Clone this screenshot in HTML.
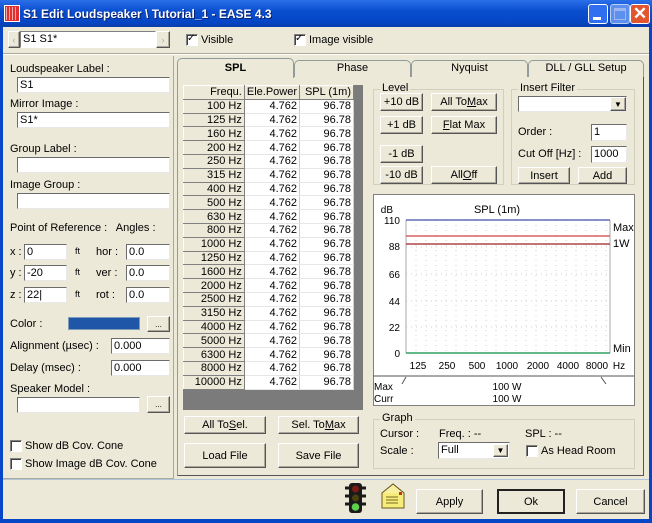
<!DOCTYPE html>
<html><head><meta charset="utf-8">
<style>
*{box-sizing:border-box}
body{margin:0;width:652px;height:523px;overflow:hidden;font-family:"Liberation Sans",Arial,sans-serif;font-size:11px;color:#000;background:#ece9d8;position:relative}
.a{position:absolute}
.in{position:absolute;background:#fff;border:1px solid #7f9db9;border-top-color:#6c6c6c;border-left-color:#6c6c6c;border-right-color:#e8e8e8;border-bottom-color:#e8e8e8;padding:1px 2px;font-size:11px;line-height:13px;white-space:nowrap}
.btn{position:absolute;background:#ece9d8;border:1px solid;border-color:#fff #555 #555 #fff;box-shadow:inset -1px -1px 0 #aca899;text-align:center;font-size:11px;display:flex;align-items:center;justify-content:center}
.cb{position:absolute;width:12px;height:12px;background:#fff;border:1px solid;border-color:#808080 #fff #fff #808080;box-shadow:inset 1px 1px 0 #404040}
.grp{position:absolute;border:1px solid #d0d0bf}
.grp span{position:absolute;top:-8px;left:6px;background:#ece9d8;padding:0 2px}
.tab{position:absolute;top:60px;height:17px;border:1px solid #919b9c;border-bottom:none;border-radius:5px 5px 0 0;background:#ece9d8;text-align:center;line-height:15px;font-size:11px}
table{border-collapse:collapse}
td{height:13.8px;padding:0 2px;text-align:right;font-size:11px;line-height:12px;border-right:1px solid #ccc;border-bottom:1px solid #e6e6e6}
td.h{background:#ece9d8;border:1px solid;border-color:#fff #808080 #808080 #fff}
</style></head><body>
<div class="a" style="left:0;top:0;width:652px;height:27px;background:linear-gradient(#2a6ee8,#0a4fd0 40%,#0545c4 85%,#0a3ea8);"></div>
<div class="a" style="left:4px;top:5px;width:16px;height:17px;background:#e03030;border:1px solid #fff;"></div>
<div class="a" style="left:6px;top:7px;width:12px;height:13px;background:repeating-linear-gradient(90deg,#fff 0 1px,transparent 1px 3px);opacity:.6"></div>
<div class="a" style="left:23px;top:7px;color:#fff;font-weight:bold;font-size:12px;text-shadow:1px 1px #0a1f6e">S1 Edit Loudspeaker \ Tutorial_1 - EASE 4.3</div>
<div class="a" style="left:588px;top:4px;width:20px;height:20px;background:#2f6ff0;border:1px solid #fff;border-radius:3px"><div class="a" style="left:4px;top:12px;width:8px;height:3px;background:#fff"></div></div>
<div class="a" style="left:610px;top:4px;width:20px;height:20px;background:#5d8fee;border:1px solid #b9cdf5;border-radius:3px"><div class="a" style="left:3px;top:3px;width:12px;height:12px;border:1px solid #9db6ee;border-top-width:3px"></div></div>
<div class="a" style="left:630px;top:4px;width:20px;height:20px;background:#e2562f;border:1px solid #fff;border-radius:3px;color:#fff;font-weight:bold;font-size:17px;line-height:18px;text-align:center">✕</div>
<div class="a" style="left:0;top:27px;width:3px;height:496px;background:#0846c8"></div>
<div class="a" style="left:649px;top:27px;width:3px;height:496px;background:#0846c8"></div>
<div class="a" style="left:0;top:519px;width:652px;height:4px;background:#0846c8"></div>

<div class="btn" style="left:8px;top:31px;width:12px;height:17px;color:#aaa;font-size:9px">‹</div>
<div class="in" style="left:20px;top:31px;width:136px;height:17px;border-color:#808080 #fff #fff #808080">S1 S1*</div>
<div class="btn" style="left:156px;top:31px;width:14px;height:17px;color:#aaa;font-size:9px">›</div>
<div class="cb" style="left:186px;top:34px"></div><div class="a" style="left:187px;top:33px;font-size:10px;line-height:12px">✓</div>
<div class="a" style="left:201px;top:34px">Visible</div>
<div class="cb" style="left:294px;top:34px"></div><div class="a" style="left:295px;top:33px;font-size:10px;line-height:12px">✓</div>
<div class="a" style="left:309px;top:34px">Image visible</div>
<div class="a" style="left:3px;top:53px;width:646px;height:1px;background:#aca899"></div>
<div class="a" style="left:3px;top:54px;width:646px;height:1px;background:#fff"></div>

<div class="a" style="left:3px;top:56px;width:171px;height:423px;border-right:1px solid #aca899;border-bottom:1px solid #aca899"></div>
<div class="a" style="left:10px;top:63px">Loudspeaker Label :</div>
<div class="in" style="left:17px;top:77px;width:153px;height:16px">S1</div>
<div class="a" style="left:10px;top:98px">Mirror Image :</div>
<div class="in" style="left:17px;top:112px;width:153px;height:16px">S1*</div>
<div class="a" style="left:10px;top:143px">Group Label :</div>
<div class="in" style="left:17px;top:157px;width:153px;height:16px"></div>
<div class="a" style="left:10px;top:179px">Image Group :</div>
<div class="in" style="left:17px;top:193px;width:153px;height:16px"></div>
<div class="a" style="left:10px;top:222px">Point of Reference :&nbsp;&nbsp; Angles :</div>
<div class="a" style="left:10px;top:246px">x :</div><div class="in" style="left:24px;top:244px;width:43px;height:16px">0</div><div class="a" style="left:75px;top:246px;font-size:9px">ft</div><div class="a" style="left:96px;top:246px">hor :</div><div class="in" style="left:126px;top:244px;width:44px;height:16px">0.0</div>
<div class="a" style="left:10px;top:267px">y :</div><div class="in" style="left:24px;top:265px;width:43px;height:16px">-20</div><div class="a" style="left:75px;top:267px;font-size:9px">ft</div><div class="a" style="left:96px;top:267px">ver :</div><div class="in" style="left:126px;top:265px;width:44px;height:16px">0.0</div>
<div class="a" style="left:10px;top:289px">z :</div><div class="in" style="left:24px;top:287px;width:43px;height:16px">22|</div><div class="a" style="left:75px;top:289px;font-size:9px">ft</div><div class="a" style="left:96px;top:289px">rot :</div><div class="in" style="left:126px;top:287px;width:44px;height:16px">0.0</div>
<div class="a" style="left:10px;top:318px">Color :</div>
<div class="a" style="left:68px;top:317px;width:72px;height:13px;background:#1f56a8;border:1px solid #7f9db9"></div>
<div class="btn" style="left:147px;top:316px;width:23px;height:16px;font-size:8px">...</div>
<div class="a" style="left:10px;top:340px">Alignment (µsec) :</div>
<div class="in" style="left:111px;top:338px;width:59px;height:16px">0.000</div>
<div class="a" style="left:10px;top:362px">Delay (msec) :</div>
<div class="in" style="left:111px;top:360px;width:59px;height:16px">0.000</div>
<div class="a" style="left:10px;top:383px">Speaker Model :</div>
<div class="in" style="left:17px;top:397px;width:123px;height:16px"></div>
<div class="btn" style="left:147px;top:396px;width:23px;height:17px;font-size:8px">...</div>
<div class="cb" style="left:10px;top:440px"></div><div class="a" style="left:25px;top:440px">Show dB Cov. Cone</div>
<div class="cb" style="left:10px;top:458px"></div><div class="a" style="left:25px;top:458px">Show Image dB Cov. Cone</div>

<div class="a" style="left:177px;top:76px;width:467px;height:400px;border:1px solid #919b9c;border-right-color:#555;border-bottom-color:#555"></div>
<div class="tab" style="left:294px;width:117px">Phase</div>
<div class="tab" style="left:411px;width:117px">Nyquist</div>
<div class="tab" style="left:528px;width:116px">DLL / GLL Setup</div>
<div class="tab" style="left:177px;top:58px;height:20px;width:117px;font-weight:bold;line-height:19px">SPL</div>

<div class="a" style="left:183px;top:85px;width:180px;height:325px;background:#7b7b7b"></div>
<div class="a" style="left:183px;top:85px;background:#fff">
<table style="width:171px">
<tr><td class="h" style="width:62px">Frequ.</td><td class="h" style="width:54px">Ele.Power</td><td class="h" style="width:55px">SPL (1m)</td></tr>
<tr><td class="h">100 Hz</td><td>4.762</td><td>96.78</td></tr>
<tr><td class="h">125 Hz</td><td>4.762</td><td>96.78</td></tr>
<tr><td class="h">160 Hz</td><td>4.762</td><td>96.78</td></tr>
<tr><td class="h">200 Hz</td><td>4.762</td><td>96.78</td></tr>
<tr><td class="h">250 Hz</td><td>4.762</td><td>96.78</td></tr>
<tr><td class="h">315 Hz</td><td>4.762</td><td>96.78</td></tr>
<tr><td class="h">400 Hz</td><td>4.762</td><td>96.78</td></tr>
<tr><td class="h">500 Hz</td><td>4.762</td><td>96.78</td></tr>
<tr><td class="h">630 Hz</td><td>4.762</td><td>96.78</td></tr>
<tr><td class="h">800 Hz</td><td>4.762</td><td>96.78</td></tr>
<tr><td class="h">1000 Hz</td><td>4.762</td><td>96.78</td></tr>
<tr><td class="h">1250 Hz</td><td>4.762</td><td>96.78</td></tr>
<tr><td class="h">1600 Hz</td><td>4.762</td><td>96.78</td></tr>
<tr><td class="h">2000 Hz</td><td>4.762</td><td>96.78</td></tr>
<tr><td class="h">2500 Hz</td><td>4.762</td><td>96.78</td></tr>
<tr><td class="h">3150 Hz</td><td>4.762</td><td>96.78</td></tr>
<tr><td class="h">4000 Hz</td><td>4.762</td><td>96.78</td></tr>
<tr><td class="h">5000 Hz</td><td>4.762</td><td>96.78</td></tr>
<tr><td class="h">6300 Hz</td><td>4.762</td><td>96.78</td></tr>
<tr><td class="h">8000 Hz</td><td>4.762</td><td>96.78</td></tr>
<tr><td class="h">10000 Hz</td><td>4.762</td><td>96.78</td></tr>
</table></div>

<div class="grp" style="left:373px;top:89px;width:131px;height:96px"><span>Level</span></div>
<div class="btn" style="left:380px;top:93px;width:43px;height:18px">+10 dB</div>
<div class="btn" style="left:431px;top:93px;width:66px;height:18px">All To <u>M</u>ax</div>
<div class="btn" style="left:380px;top:116px;width:43px;height:18px">+1 dB</div>
<div class="btn" style="left:431px;top:116px;width:66px;height:18px"><u>F</u>lat Max</div>
<div class="btn" style="left:380px;top:145px;width:43px;height:18px">-1 dB</div>
<div class="btn" style="left:380px;top:166px;width:43px;height:18px">-10 dB</div>
<div class="btn" style="left:431px;top:166px;width:66px;height:18px">All <u>O</u>ff</div>

<div class="grp" style="left:511px;top:89px;width:124px;height:96px"><span>Insert Filter</span></div>
<div class="in" style="left:518px;top:96px;width:109px;height:16px"></div>
<div class="btn" style="left:610px;top:97px;width:16px;height:14px;font-size:8px">▼</div>
<div class="a" style="left:518px;top:126px">Order :</div>
<div class="in" style="left:591px;top:124px;width:36px;height:17px">1</div>
<div class="a" style="left:518px;top:148px">Cut Off [Hz] :</div>
<div class="in" style="left:591px;top:146px;width:36px;height:17px">1000</div>
<div class="btn" style="left:518px;top:167px;width:52px;height:17px">Insert</div>
<div class="btn" style="left:578px;top:167px;width:49px;height:17px">Add</div>

<svg class="a" style="left:373px;top:194px" width="262" height="212" font-family="Liberation Sans,Arial,sans-serif" font-size="11">
<rect x="0.5" y="0.5" width="261" height="211" fill="#fff" stroke="#808080"/>
<g stroke="#d0d0d0" stroke-dasharray="1,4">
<line x1="43" y1="26" x2="43" y2="159"/><line x1="53" y1="26" x2="53" y2="159"/><line x1="63" y1="26" x2="63" y2="159"/><line x1="73" y1="26" x2="73" y2="159"/><line x1="83" y1="26" x2="83" y2="159"/><line x1="93" y1="26" x2="93" y2="159"/><line x1="103" y1="26" x2="103" y2="159"/><line x1="113" y1="26" x2="113" y2="159"/><line x1="123" y1="26" x2="123" y2="159"/><line x1="133" y1="26" x2="133" y2="159"/><line x1="143" y1="26" x2="143" y2="159"/><line x1="153" y1="26" x2="153" y2="159"/><line x1="163" y1="26" x2="163" y2="159"/><line x1="173" y1="26" x2="173" y2="159"/><line x1="183" y1="26" x2="183" y2="159"/><line x1="193" y1="26" x2="193" y2="159"/><line x1="203" y1="26" x2="203" y2="159"/><line x1="213" y1="26" x2="213" y2="159"/><line x1="223" y1="26" x2="223" y2="159"/><line x1="233" y1="26" x2="233" y2="159"/>
<line x1="33" y1="53" x2="237" y2="53"/><line x1="33" y1="80" x2="237" y2="80"/><line x1="33" y1="107" x2="237" y2="107"/><line x1="33" y1="133" x2="237" y2="133"/>
</g>
<line x1="33" y1="26" x2="33" y2="159" stroke="#aaa"/><line x1="237" y1="26" x2="237" y2="159" stroke="#aaa"/>
<line x1="33" y1="26" x2="237" y2="26" stroke="#4050a8" stroke-width="1.3"/>
<line x1="33" y1="42" x2="237" y2="42" stroke="#d04040" stroke-width="1.3"/>
<line x1="33" y1="50" x2="237" y2="50" stroke="#a02020" stroke-width="1.3"/>
<line x1="33" y1="159" x2="237" y2="159" stroke="#30a060" stroke-width="1.5"/>
<text x="20" y="19" text-anchor="end" font-size="10">dB</text>
<text x="124" y="19" text-anchor="middle">SPL (1m)</text>
<g text-anchor="end" font-size="10"><text x="27" y="30">110</text><text x="27" y="56">88</text><text x="27" y="84">66</text><text x="27" y="111">44</text><text x="27" y="137">22</text><text x="27" y="163">0</text></g>
<text x="240" y="37">Max</text><text x="240" y="53">1W</text><text x="240" y="158">Min</text>
<g text-anchor="middle" font-size="10"><text x="45" y="175">125</text><text x="74" y="175">250</text><text x="104" y="175">500</text><text x="134" y="175">1000</text><text x="165" y="175">2000</text><text x="195" y="175">4000</text><text x="224" y="175">8000</text><text x="246" y="175">Hz</text></g>
<path d="M0 182 H261" stroke="#555"/>
<path d="M33 183 L29 190 M228 183 L233 190" stroke="#555"/>
<text x="1" y="196" font-size="10">Max</text><text x="1" y="208" font-size="10">Curr</text>
<text x="134" y="196" text-anchor="middle" font-size="10">100 W</text><text x="134" y="208" text-anchor="middle" font-size="10">100 W</text>
</svg>

<div class="btn" style="left:184px;top:416px;width:82px;height:18px">All To <u>S</u>el.</div>
<div class="btn" style="left:278px;top:416px;width:81px;height:18px">Sel. To <u>M</u>ax</div>
<div class="btn" style="left:184px;top:443px;width:82px;height:25px">Load File</div>
<div class="btn" style="left:278px;top:443px;width:81px;height:25px">Save File</div>

<div class="grp" style="left:373px;top:419px;width:262px;height:50px"><span>Graph</span></div>
<div class="a" style="left:380px;top:428px">Cursor :</div>
<div class="a" style="left:439px;top:428px">Freq. : --</div>
<div class="a" style="left:525px;top:428px">SPL : --</div>
<div class="a" style="left:380px;top:445px">Scale :</div>
<div class="in" style="left:438px;top:442px;width:72px;height:17px">Full</div>
<div class="btn" style="left:493px;top:444px;width:15px;height:13px;font-size:8px">▼</div>
<div class="cb" style="left:526px;top:445px"></div><div class="a" style="left:541px;top:445px">As Head Room</div>

<div class="a" style="left:3px;top:479px;width:646px;height:1px;background:#b0c4de"></div>

<svg class="a" style="left:344px;top:482px" width="24" height="34">
<rect x="5" y="1" width="13" height="30" rx="3" fill="#1a1a1a"/>
<path d="M1 6h4M18 6h4M1 14h4M18 14h4M1 22h4M18 22h4" stroke="#1a1a1a" stroke-width="3"/>
<circle cx="11.5" cy="7" r="3.5" fill="#7a1a14"/><circle cx="11.5" cy="16" r="3.5" fill="#4a4010"/><circle cx="11.5" cy="25" r="3.8" fill="#5ecf4a"/>
</svg>
<svg class="a" style="left:381px;top:483px" width="24" height="26">
<path d="M1 10 L12 1 L23 10 V25 H1 Z" fill="#f6ec7a" stroke="#6a5a20"/>
<path d="M1 10 L12 1 L23 10" fill="#f8f0a0" stroke="#6a5a20"/>
<rect x="18" y="9" width="3" height="3" fill="#c03030"/>
<path d="M5 14h12M5 17h12M5 20h12" stroke="#7a6a20"/>
</svg>
<div class="btn" style="left:416px;top:489px;width:67px;height:25px">Apply</div>
<div class="btn" style="left:497px;top:489px;width:68px;height:25px;border:2px solid #222;box-shadow:none">Ok</div>
<div class="btn" style="left:576px;top:489px;width:69px;height:25px">Cancel</div>
</body></html>
